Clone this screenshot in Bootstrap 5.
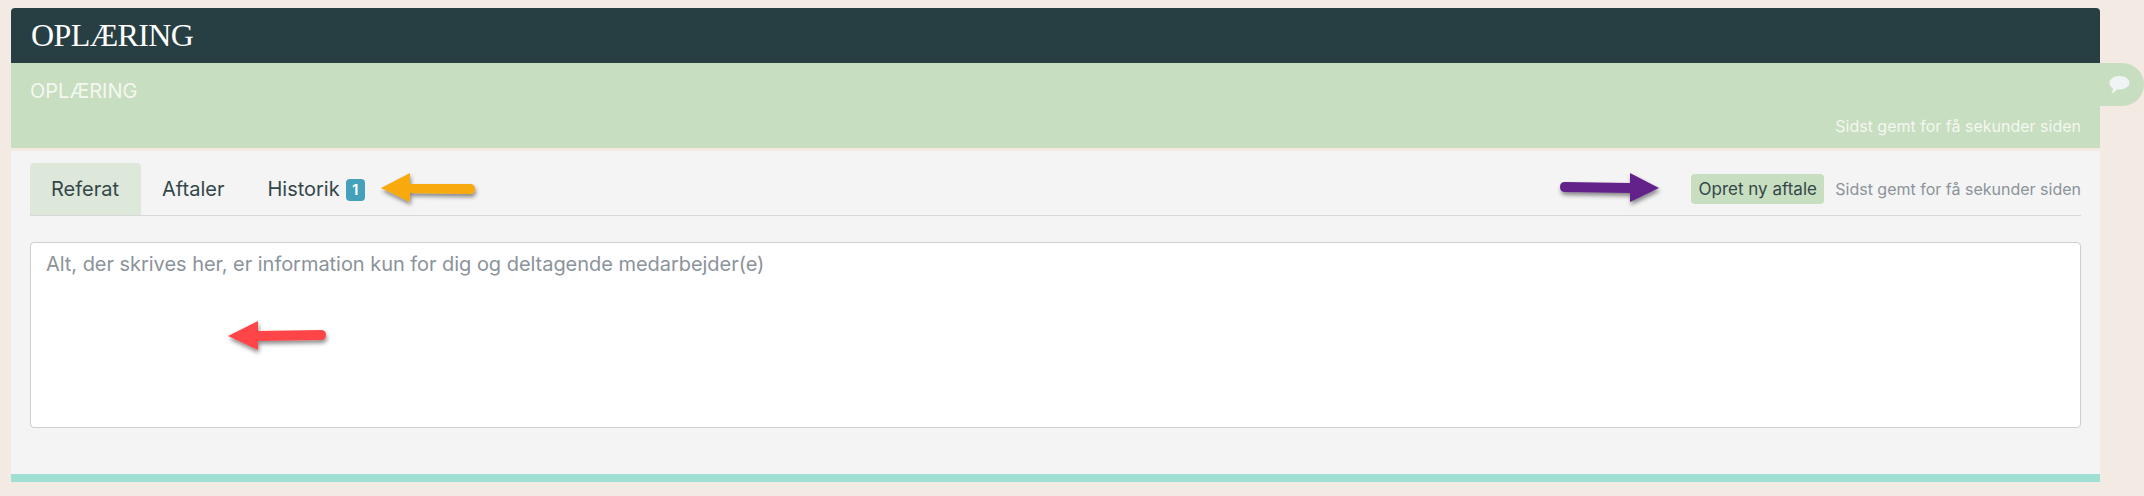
<!DOCTYPE html>
<html lang="da">
<head>
    <meta charset="UTF-8">
    <meta name="viewport" content="width=device-width, initial-scale=1.0">
    <title>Oplæring</title>
    <link href="https://cdn.jsdelivr.net/npm/bootstrap@5.3.0/dist/css/bootstrap.min.css" rel="stylesheet">
    <style>
        body { background: #f3ebe3; font-family: Inter, "Liberation Sans", sans-serif; font-size: 16px; color: #33474a; height: 496px; overflow: hidden; }
        .page-wrap { position: relative; margin: 8px 44px 0 11px; }
        .top-title { background: #273f42; height: 55px; padding: 0 20px; border-radius: 4px 4px 0 0; font-family: "Liberation Serif", serif; font-size: 32px; line-height: 55px; color: #fff; letter-spacing: -0.6px; }
        .green-head { background: #c8dec0; height: 85px; margin-bottom: 3px; padding: 16px 19px 0; color: #f4f7f1; }
        .green-title { font-size: 20px; line-height: 24px; }
        .saved-note { font-size: 16px; line-height: 20px; white-space: nowrap; }
        .green-head .saved-note { margin-top: 13px; text-align: right; }
        .side-tab { position: absolute; left: 100%; top: 55px; width: 44px; height: 43px; background: #c8dec0; border-radius: 0 22px 22px 0; display: flex; align-items: center; justify-content: flex-end; padding-right: 14px; }
        .gray-body { background: #f4f4f4; height: 323px; padding: 12px 19px 0; }
        .tab-row { border-bottom: 1px solid #d8d8d8; height: 53px; }
        .tab-row .nav-link { color: #33474a; height: 52px; padding: 0 21px; line-height: 52px; border: 0; border-radius: 4px 4px 0 0; font-size: 20px; }
        .tab-row .nav-link.active { background: #dee8da; color: #33474a; width: 111px; }
        .tab-row .nav-link.tab-aftaler { padding: 0 21px; }
        .tab-row .nav-link.tab-historik { padding: 0 0 0 22px; }
        .count-pill { background: #45a0bb; color: #fff; font-size: 14px; font-weight: 700; border-radius: 4px; padding: 0; width: 19px; height: 22px; line-height: 22px; margin-left: 6px; vertical-align: 1px; }
        .new-btn { background: #c8dec0; color: #33474a; border: 0; border-radius: 4px; height: 30px; width: 133px; padding: 0; font-size: 17px; line-height: 30px; white-space: nowrap; }
        .tab-row .saved-note { color: #8b939b; margin-left: 11px; }
        .note-area { display: block; width: 100%; height: 186px; margin-top: 26px; padding: 6px 15px; font-size: 20px; letter-spacing: -0.04px; border: 1px solid #cfcfcf; border-radius: 4px; resize: none; }
        .note-area::placeholder { color: #8b939b; opacity: 1; }
        .teal-line { background: #9fdfd4; height: 8px; }
        .arrow-layer { position: absolute; left: 0; top: 0; width: 2144px; height: 496px; pointer-events: none; }
    </style>
</head>
<body>
<div class="page-wrap">
    <div class="top-title">OPLÆRING</div>
    <div class="green-head">
        <div class="green-title">OPLÆRING</div>
        <div class="saved-note">Sidst gemt for få sekunder siden</div>
    </div>
    <div class="side-tab">
        <svg width="21" height="18" viewBox="0 0 21 18"><path fill="#f0f4f4" d="M10.500 0c5.500 0 10 2.900 10 6.700s-4.500 6.700-10 6.700c-.9 0-1.800-.1-2.600-.2C6.600 15.200 4.500 17 2 17.800c1.100-1.300 1.900-3.100 2-5.500C1.700 11 .5 9 .5 6.700.5 2.900 5 0 10.500 0z"/></svg>
    </div>
    <div class="gray-body">
        <div class="tab-row d-flex justify-content-between align-items-center">
            <ul class="nav align-self-start">
                <li class="nav-item"><a class="nav-link active" href="#">Referat</a></li>
                <li class="nav-item"><a class="nav-link tab-aftaler" href="#">Aftaler</a></li>
                <li class="nav-item"><a class="nav-link tab-historik" href="#">Historik<span class="badge count-pill">1</span></a></li>
            </ul>
            <div class="d-flex align-items-center">
                <button type="button" class="btn new-btn">Opret ny aftale</button>
                <span class="saved-note">Sidst gemt for få sekunder siden</span>
            </div>
        </div>
        <textarea class="form-control note-area" placeholder="Alt, der skrives her, er information kun for dig og deltagende medarbejder(e)"></textarea>
    </div>
    <div class="teal-line"></div>
</div>

<!-- annotation arrows on top of the screenshot -->
<svg class="arrow-layer" viewBox="0 0 2144 496">
    <defs>
        <filter id="arrowShadow" x="-20%" y="-50%" width="140%" height="200%">
            <feDropShadow dx="1" dy="3" stdDeviation="2" flood-color="#000" flood-opacity="0.45"/>
        </filter>
    </defs>
    <path filter="url(#arrowShadow)" fill="#f7a90c" d="M381 188 410 173V184L470 184Q475 184 475 189 475 194 470 194L410 193V202Z"/>
    <path filter="url(#arrowShadow)" fill="#62218a" d="M1659 188 1630 173V183L1565 182Q1560 182 1560 187 1560 192 1565 192L1630 193V202Z"/>
    <path filter="url(#arrowShadow)" fill="#ff4447" d="M228 336 258 321V331L321 330Q326 330 326 335 326 340 321 340L258 341V350Z"/>
</svg>

<script src="https://cdn.jsdelivr.net/npm/bootstrap@5.3.0/dist/js/bootstrap.bundle.min.js"></script>
</body>
</html>
